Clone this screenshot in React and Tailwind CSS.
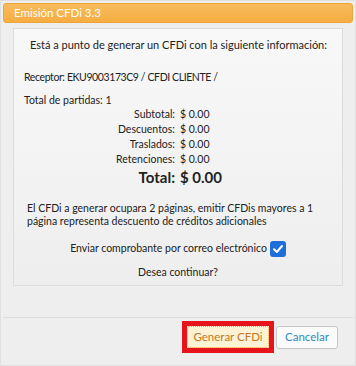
export default function App() {
  const font = { fontFamily: 'Lato, "Open Sans", sans-serif' };
  const rows = [
    ["Subtotal:", "$ 0.00"],
    ["Descuentos:", "$ 0.00"],
    ["Traslados:", "$ 0.00"],
    ["Retenciones:", "$ 0.00"],
  ];
  return (
    <div
      className="w-[356px] h-[366px] bg-[#eeeeee] border border-[#e0e0e0] flex flex-col text-[#222222] text-[10.5px] overflow-hidden"
      style={font}
    >
      <div className="mx-[2px] mt-[2px] h-[20px] rounded-[3px] border border-[#eda43a] bg-gradient-to-b from-[#f8bb5c] to-[#f5ad41] flex items-center pl-[10px] text-white text-[11.5px]">
        Emisión CFDi 3.3
      </div>
      <div className="mx-[12px] mt-[5px] h-[258px] border border-[#dcdcdc] bg-gradient-to-b from-[#f8f8f8] to-[#eeeeee] flex flex-col">
        <div className="mt-[9px] text-center text-[11px] pl-[1px] leading-[14px]">
          Está a punto de generar un CFDi con la siguiente información:
        </div>
        <div className="mt-[18px] pl-[10px] leading-[14px] text-[10.5px] tracking-[-0.4px]">Receptor: EKU9003173C9 / CFDI CLIENTE /</div>
        <div className="mt-[9px] pl-[10px] leading-[14px]">Total de partidas: 1</div>
        <div className="flex flex-col">
          {rows.map(([l, v]) => (
            <div key={l} className="flex h-[15px] items-center">
              <div className="w-[161px] text-right">{l}</div>
              <div className="pl-[5px]">{v}</div>
            </div>
          ))}
          <div className="flex h-[21px] items-center text-[15px] font-bold">
            <div className="w-[161px] text-right">Total:</div>
            <div className="pl-[5px]">$ 0.00</div>
          </div>
        </div>
        <div className="mt-[14px] pl-[13px] pr-[10px] leading-[13px]">
          El CFDi a generar ocupara 2 páginas, emitir CFDis mayores a 1 página representa descuento de créditos adicionales
        </div>
        <div className="mt-[13px] flex items-center justify-center gap-[3px]">
          <span>Enviar comprobante por correo electrónico</span>
          <span className="w-[16px] h-[16px] rounded-[3px] bg-[#1e6fd9] flex items-center justify-center">
            <svg width="12" height="12" viewBox="0 0 12 12">
              <path d="M2 6.2 L4.8 9 L10 3" stroke="white" strokeWidth="2" fill="none" strokeLinecap="round" strokeLinejoin="round" />
            </svg>
          </span>
        </div>
        <div className="mt-[8px] text-center">Desea continuar?</div>
      </div>
      <div className="mt-[31px] ml-[2px] border-t border-[#dddddd]"></div>
      <div className="flex justify-end items-center pr-[17px] mt-[3px] gap-[2px]">
        <div className="border-[5px] border-[#e8141c]">
          <button className="h-[22px] w-[82px] bg-[#fdf2d4] border border-dotted border-[#eaa640] rounded-[2px] text-[#c0782a] text-[11.5px]" style={font}>
            Generar CFDi
          </button>
        </div>
        <button className="h-[23px] w-[62px] bg-[#fbfbfb] border border-[#c6c6c6] rounded-[3px] text-[#2e8bc0] text-[11.5px]" style={font}>
          Cancelar
        </button>
      </div>
    </div>
  );
}
